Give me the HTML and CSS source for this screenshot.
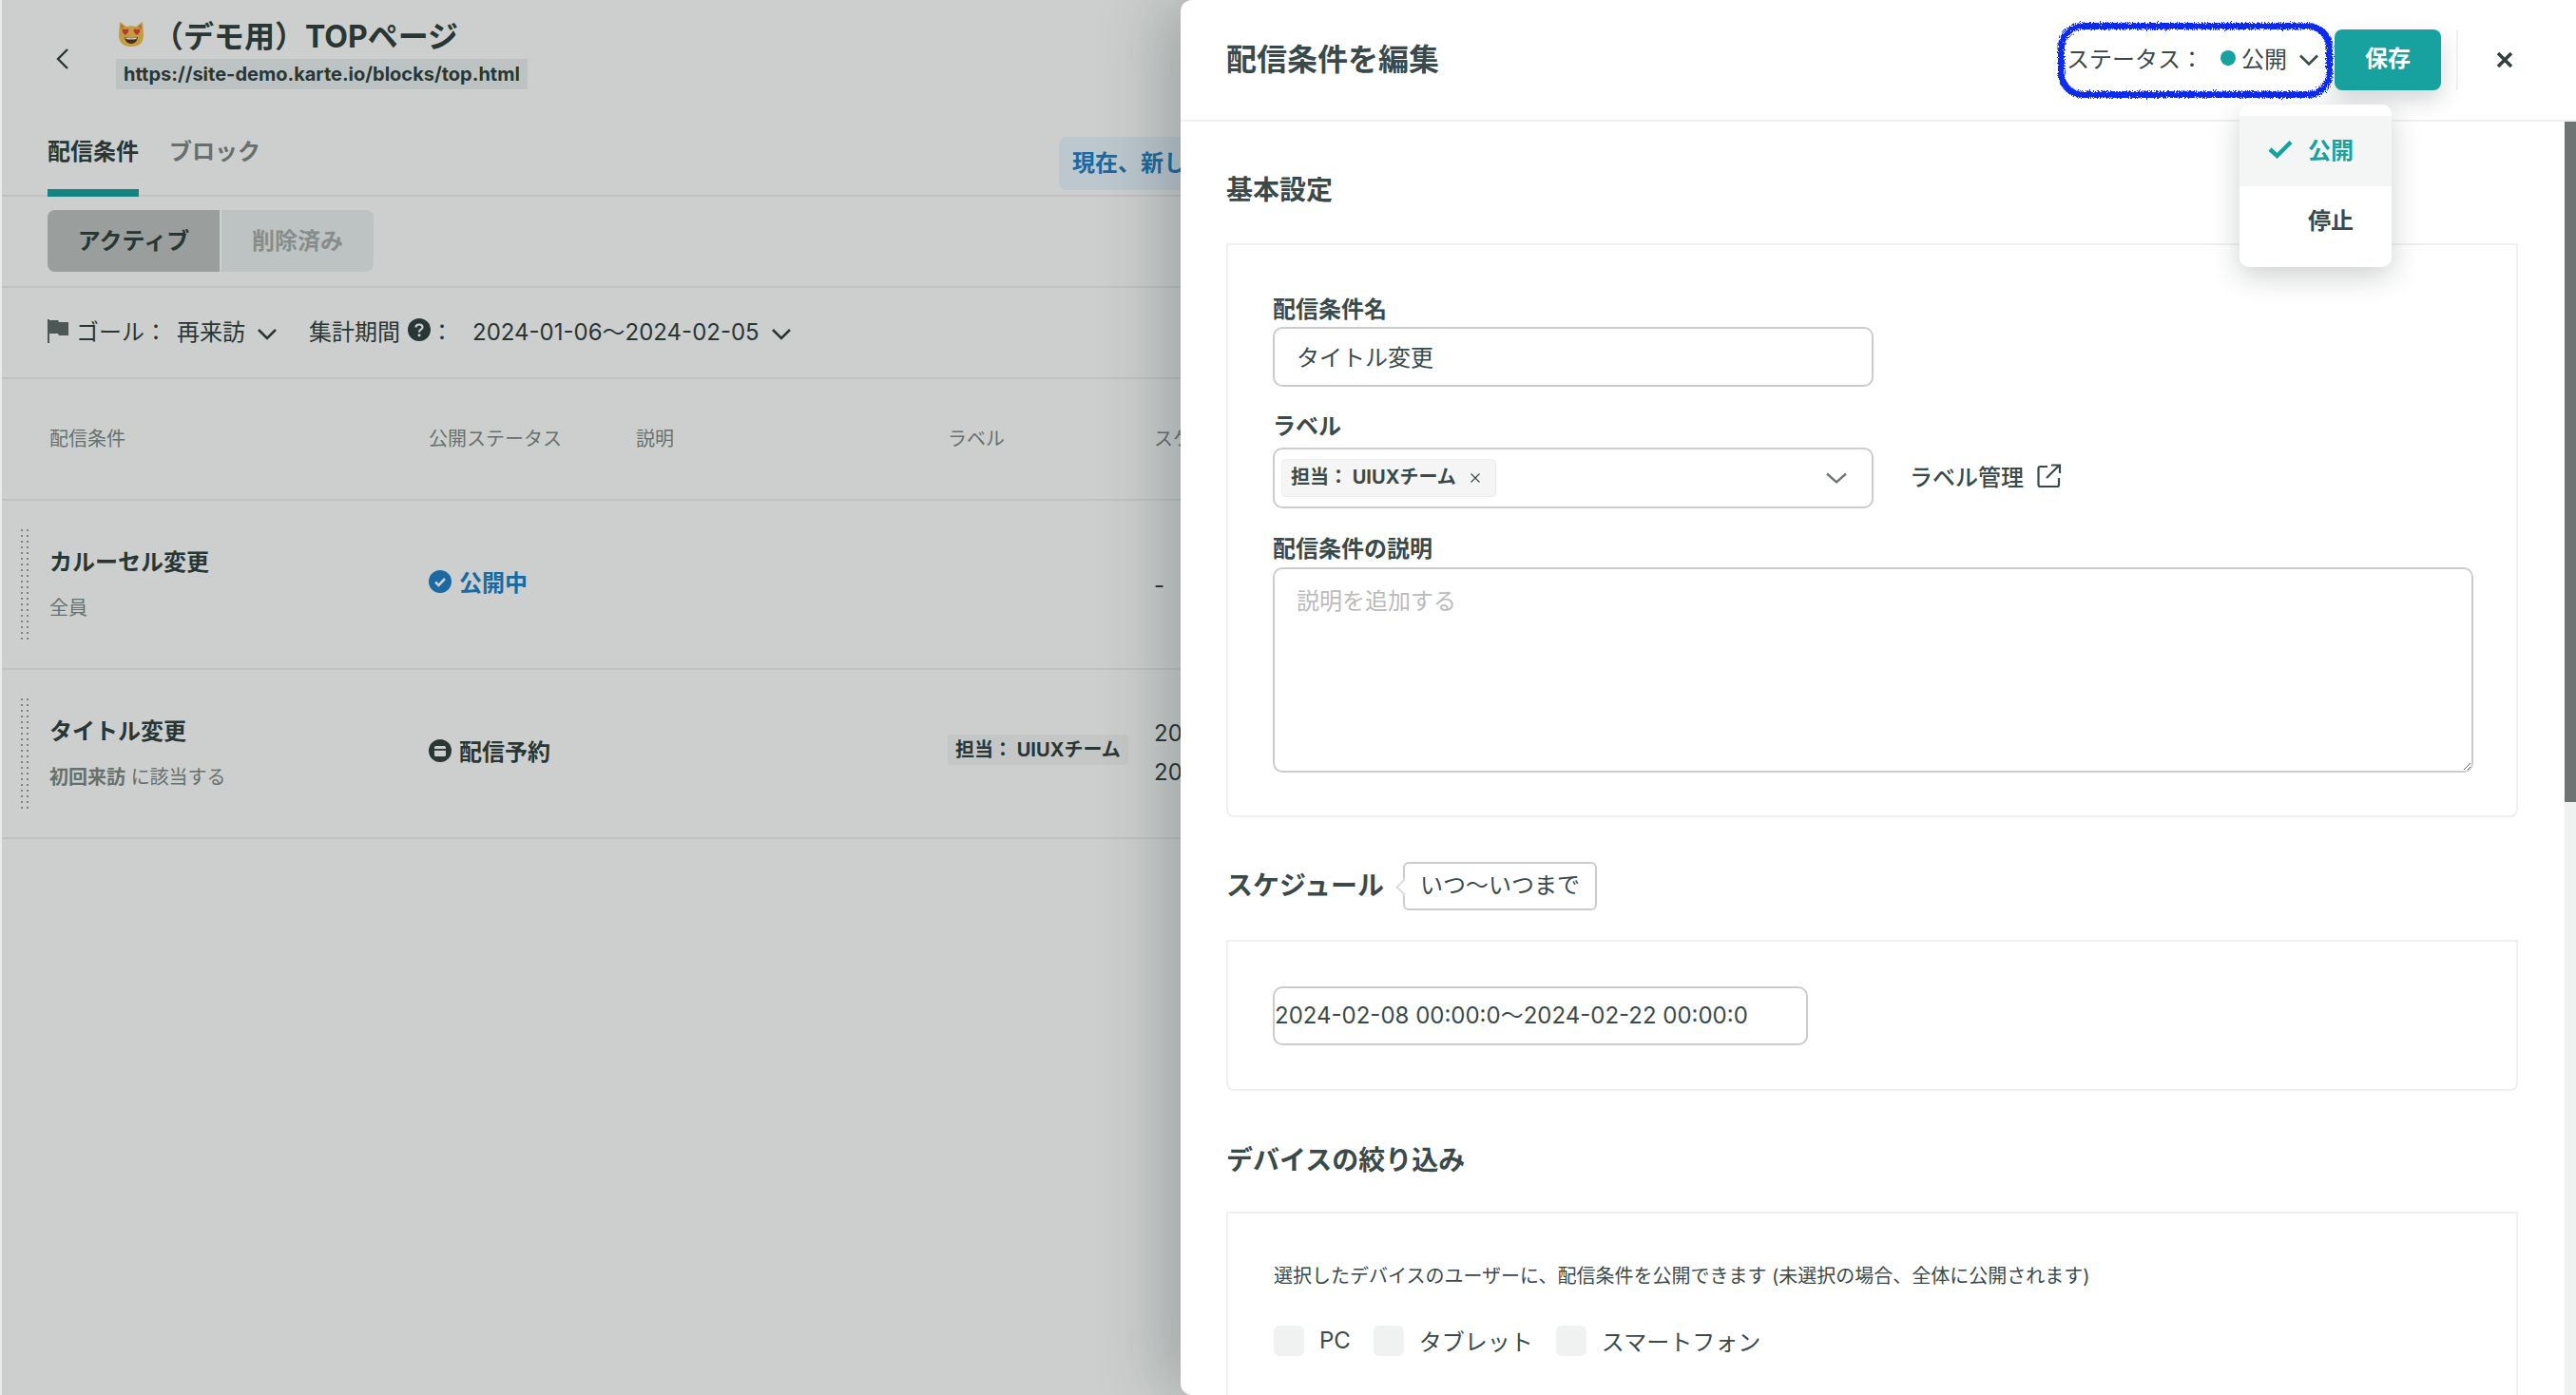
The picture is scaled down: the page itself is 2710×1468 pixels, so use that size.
FILE: index.html
```html
<!DOCTYPE html>
<html lang="ja">
<head>
    <meta charset="UTF-8">
    <title>配信条件を編集</title>
    <link rel="stylesheet" href="styles.css">
</head>
<body>

    <!-- Page behind the drawer -->
    <div class="page">
        <div class="page-head">
            <svg class="back-icon" width="16" height="24" viewBox="0 0 16 24"><polyline points="13,2 3,12 13,22" fill="none" stroke="currentColor" stroke-width="2.4"/></svg>
            <div class="page-title-block">
                <div class="page-title">
                    <svg class="cat-emoji" width="28" height="28" viewBox="0 0 28 28">
                        <path d="M2 1 L9 6 Q14 4.500 19 6 L26 1 L27 15 Q27 27 14 27 Q1 27 1 15 Z" fill="#f3c04f"/>
                        <path d="M3 3 L7 6 L3 9 Z M25 3 L21 6 L25 9 Z" fill="#d9913c"/>
                        <path d="M8 15 C3 11 4 7 8 9 C12 7 13 11 8 15 Z M20 15 C15 11 16 7 20 9 C24 7 25 11 20 15 Z" fill="#e8413f"/>
                        <path d="M7 17 Q14 19 21 17 Q20 24 14 24 Q8 24 7 17 Z" fill="#5a3420"/>
                        <path d="M8 17.500 Q14 19 20 17.500 L19.500 19 Q14 20 8.500 19 Z" fill="#fff"/>
                    </svg>
                    <span>（デモ用）TOPページ</span>
                </div>
                <span class="page-url">https://site-demo.karte.io/blocks/top.html</span>
            </div>
        </div>

        <div class="tabs">
            <div class="tab tab-active">配信条件</div>
            <div class="tab">ブロック</div>
            <div class="notice">現在、新しい配信条件を作成できます</div>
        </div>

        <div class="seg-row">
            <div class="seg seg-active">アクティブ</div>
            <div class="seg">削除済み</div>
        </div>

        <div class="filter-row">
            <svg class="flag-icon" width="22" height="28" viewBox="0 0 22 28"><path d="M0 3 H2 V28 H0 Z" fill="#5f6b69"/><path d="M2 4 H11 L12 6 H22 V20 H12 L11 18 H2 Z" fill="#5f6b69"/></svg>
            <span class="filter-label">ゴール：</span>
            <span class="filter-value">再来訪</span>
            <svg class="chevron" width="22" height="14" viewBox="0 0 22 14"><polyline points="2,3 11,12 20,3" fill="none" stroke="currentColor" stroke-width="2.6"/></svg>
            <span class="filter-period">集計期間</span>
            <svg class="help-icon" width="24" height="24" viewBox="0 0 24 24"><circle cx="12" cy="12" r="12" fill="#314140"/><path d="M8.500 9.500 Q8.500 6.500 12 6.500 Q15.500 6.500 15.500 9.300 Q15.500 11 13.500 12 Q12 12.800 12 14.500" fill="none" stroke="#fff" stroke-width="2.200"/><circle cx="12" cy="17.800" r="1.500" fill="#fff"/></svg>
            <span class="filter-colon">：</span>
            <span class="filter-value filter-date">2024-01-06〜2024-02-05</span>
            <svg class="chevron" width="22" height="14" viewBox="0 0 22 14"><polyline points="2,3 11,12 20,3" fill="none" stroke="currentColor" stroke-width="2.6"/></svg>
        </div>

        <div class="table-head">
            <div>配信条件</div>
            <div>公開ステータス</div>
            <div>説明</div>
            <div>ラベル</div>
            <div>スケジュール</div>
        </div>

        <div class="table-row">
            <div class="drag-handle"></div>
            <div class="row-name-cell">
                <div class="row-name">カルーセル変更</div>
                <div class="row-sub">全員</div>
            </div>
            <div class="row-status status-live">
                <svg width="24" height="24" viewBox="0 0 24 24"><circle cx="12" cy="12" r="12" fill="#2080c8"/><polyline points="7,12.500 10.500,16 17,9" fill="none" stroke="#fff" stroke-width="2.600"/></svg>
                <span>公開中</span>
            </div>
            <div></div>
            <div></div>
            <div class="row-schedule">-</div>
        </div>

        <div class="table-row">
            <div class="drag-handle"></div>
            <div class="row-name-cell">
                <div class="row-name">タイトル変更</div>
                <div class="row-sub"><b>初回来訪</b> に該当する</div>
            </div>
            <div class="row-status">
                <svg width="24" height="24" viewBox="0 0 24 24"><circle cx="12" cy="12" r="12" fill="#314140"/><rect x="6" y="7" width="12" height="11" rx="1.500" fill="#fff"/><rect x="6" y="10" width="12" height="1.800" fill="#314140"/></svg>
                <span>配信予約</span>
            </div>
            <div></div>
            <div><span class="row-tag">担当： UIUXチーム</span></div>
            <div class="row-schedule row-dates">
                <div>2024-02-08 00:00:00</div>
                <div>2024-02-22 00:00:00</div>
            </div>
        </div>

        <div class="backdrop"></div>
    </div>

    <!-- Drawer -->
    <div class="drawer">
        <div class="drawer-head">
            <div class="drawer-title">配信条件を編集</div>
            <div class="status-select">
                <span class="scribble"></span>
                <span>ステータス：</span>
                <span class="status-dot"></span>
                <span>公開</span>
                <svg width="22" height="14" viewBox="0 0 22 14"><polyline points="2,2.500 11,11.500 20,2.500" fill="none" stroke="#3a4a4a" stroke-width="2.600"/></svg>
            </div>
            <div class="save-btn">保存</div>
            <div class="head-sep"></div>
            <svg class="close-icon" width="18" height="18" viewBox="0 0 18 18"><path d="M2 2 L16 16 M16 2 L2 16" stroke="#33403f" stroke-width="3.600"/></svg>
        </div>

        <div class="status-menu">
            <div class="status-option status-option-on">
                <svg width="26" height="20" viewBox="0 0 26 20"><polyline points="2,10 9.500,17 24,2.500" fill="none" stroke="#17a2a0" stroke-width="4.500"/></svg>
                <span>公開</span>
            </div>
            <div class="status-option">
                <span class="status-option-text">停止</span>
            </div>
        </div>

        <div class="drawer-body">
            <div class="drawer-content">
                <h2 class="section-title section-first">基本設定</h2>
                <div class="card card-basic">
                    <div class="field-label label-name">配信条件名</div>
                    <div class="text-box box-name">タイトル変更</div>

                    <div class="field-label label-tags">ラベル</div>
                    <div class="tag-row">
                        <div class="text-box box-name tag-select">
                            <span class="tag-chip">担当： UIUXチーム<svg class="tag-x" width="12" height="12" viewBox="0 0 12 12"><path d="M1.500 1.500 L10.500 10.500 M10.500 1.500 L1.500 10.500" stroke="#3a4a4a" stroke-width="1.200"/></svg></span>
                            <svg width="24" height="14" viewBox="0 0 24 14"><polyline points="2,2.500 12,11.500 22,2.500" fill="none" stroke="#6f7775" stroke-width="2.400"/></svg>
                        </div>
                        <div class="tag-manage">
                            <span>ラベル管理</span>
                            <svg width="26" height="26" viewBox="0 0 26 26"><path d="M11 3 H3.500 Q1.500 3 1.500 5 V22 Q1.500 24 3.500 24 H21 Q23 24 23 22 V15" fill="none" stroke="#3a4a4a" stroke-width="2.200"/><path d="M10 15 L23 2 M15 1.500 H24 V10" fill="none" stroke="#3a4a4a" stroke-width="2.200"/></svg>
                        </div>
                    </div>

                    <div class="field-label label-desc">配信条件の説明</div>
                    <div class="text-box desc-box">説明を追加する</div>
                </div>

                <div class="section-row">
                    <h2 class="section-title">スケジュール</h2>
                    <div class="callout">いつ〜いつまで</div>
                </div>
                <div class="card card-schedule">
                    <div class="text-box date-box">2024-02-08 00:00:0〜2024-02-22 00:00:0</div>
                </div>

                <h2 class="section-title section-device">デバイスの絞り込み</h2>
                <div class="card card-device">
                    <div class="device-note">選択したデバイスのユーザーに、配信条件を公開できます (未選択の場合、全体に公開されます)</div>
                    <div class="device-row">
                        <span class="check"></span><span class="check-label">PC</span>
                        <span class="check"></span><span class="check-label">タブレット</span>
                        <span class="check"></span><span class="check-label">スマートフォン</span>
                    </div>
                </div>
            </div>
            <div class="scrollbar"><div class="scrollbar-thumb"></div></div>
        </div>
    </div>

    <!-- Rough edge for the hand drawn highlight -->
    <svg class="svg-defs" width="0" height="0">
        <filter id="rough" x="-5%" y="-10%" width="110%" height="120%">
            <feTurbulence type="fractalNoise" baseFrequency="0.9" numOctaves="2" seed="4"/>
            <feDisplacementMap in="SourceGraphic" scale="7"/>
        </filter>
    </svg>

</body>
</html>
```

FILE: styles.css
```css
* {
    box-sizing: border-box;
}

html, body {
    margin: 0;
    height: 100%;
    overflow: hidden;
}

body {
    position: relative;
    font-family: Inter, "Noto Sans CJK JP", sans-serif;
    font-size: 24px;
    color: #3a4a4a;
    background-color: #ffffff;
}

/* Page behind the drawer */
.page {
    position: relative;
    height: 100%;
    overflow: hidden;
    border-left: 2px solid #eaeaea;
    color: #314140;
    white-space: nowrap;
}

.backdrop {
    position: absolute;
    top: 0;
    right: 0;
    bottom: 0;
    left: -2px;
    background-color: rgba(5, 15, 10, 0.2);
}

.page-head {
    display: flex;
    align-items: flex-start;
    height: 120px;
    padding-left: 56px;
}

.back-icon {
    margin-top: 50px;
}

.page-title-block {
    margin-left: 48px;
    padding-top: 16px;
}

.page-title {
    display: flex;
    align-items: center;
    height: 40px;
    margin-bottom: 6px;
    font-size: 32px;
    font-weight: 700;
}

.cat-emoji {
    margin-left: 2px;
    margin-right: 9px;
}

.page-url {
    display: inline-block;
    height: 32px;
    padding: 0 8px;
    line-height: 32px;
    font-size: 20px;
    font-weight: 700;
    background-color: #ecf0f1;
}

.tabs {
    display: flex;
    height: 87px;
    padding-left: 48px;
    border-bottom: 2px solid #f0f0f0;
}

.tab {
    height: 87px;
    padding-top: 24px;
    margin-right: 32px;
    line-height: 32px;
    font-weight: 700;
    color: #7f8a88;
}

.tab-active {
    color: #314140;
    border-bottom: 8px solid #17a2a0;
}

.notice {
    height: 56px;
    margin-top: 24px;
    margin-left: 808px;
    padding: 0 14px;
    line-height: 56px;
    font-weight: 700;
    color: #2080c8;
    background-color: #eaf6ff;
    border-radius: 8px;
}

.seg-row {
    display: flex;
    gap: 2px;
    height: 96px;
    padding: 14px 0 15px 48px;
    border-bottom: 2px solid #f0f0f0;
}

.seg {
    width: 160px;
    line-height: 65px;
    text-align: center;
    font-weight: 700;
    color: #a8adae;
    background-color: #ecf0f1;
    border-radius: 0 8px 8px 0;
}

.seg-active {
    width: 181px;
    color: #314140;
    background-color: #c0c2c1;
    border-radius: 8px 0 0 8px;
}

.filter-row {
    display: flex;
    align-items: center;
    height: 96px;
    padding-left: 48px;
    padding-bottom: 6px;
    border-bottom: 2px solid #f0f0f0;
}

.flag-icon {
    margin-right: 8px;
}

.filter-label {
    width: 106px;
}

.chevron {
    margin-left: 12px;
    margin-top: 7px;
}

.filter-period {
    margin-left: 33px;
    margin-right: 8px;
}

.filter-colon {
    width: 44px;
}

/* Table */
.table-head {
    display: grid;
    grid-template-columns: 399px 218px 328px 217px 1fr;
    align-items: center;
    height: 128px;
    padding-left: 50px;
    padding-bottom: 3px;
    font-size: 20px;
    color: #7f8a88;
    border-bottom: 2px solid #f0f0f0;
}

.table-row {
    display: grid;
    grid-template-columns: 32px 399px 218px 328px 217px 1fr;
    align-items: center;
    height: 178px;
    padding-left: 18px;
    border-bottom: 2px solid #f0f0f0;
}

.drag-handle {
    width: 12px;
    height: 120px;
    background-image: radial-gradient(circle, #9aa2a0 1px, transparent 1.3px);
    background-size: 6px 6px;
}

.row-name {
    line-height: 32px;
    font-weight: 700;
    margin-bottom: 17px;
}

.row-sub {
    line-height: 30px;
    font-size: 20px;
    color: #7f8a88;
}

.row-status {
    display: flex;
    align-items: center;
    gap: 8px;
    margin-bottom: 7px;
    font-weight: 700;
}

.status-live {
    color: #2080c8;
}

.row-tag {
    display: inline-block;
    height: 32px;
    padding: 0 8px;
    line-height: 32px;
    font-size: 20px;
    font-weight: 700;
    margin-bottom: 8px;
    background-color: #f5f5f5;
    border-radius: 4px;
}

.row-dates {
    margin-bottom: 2px;
    line-height: 41px;
}

/* Drawer */
.drawer {
    position: absolute;
    top: 0;
    right: 0;
    bottom: 0;
    width: 1468px;
    display: flex;
    flex-direction: column;
    background-color: #ffffff;
    border-radius: 12px 0 0 12px;
    box-shadow: -16px 0 70px rgba(30, 45, 50, 0.28);
}

.drawer-head {
    display: flex;
    align-items: center;
    flex-shrink: 0;
    height: 128px;
    padding-left: 48px;
    border-bottom: 2px solid #f0f0f0;
}

.drawer-title {
    margin-right: 651px;
    padding-bottom: 6px;
    font-size: 32px;
    font-weight: 700;
}

.status-select {
    position: relative;
    display: flex;
    align-items: center;
    width: 291px;
    height: 79px;
    padding-left: 9px;
    padding-bottom: 5px;
}

.scribble {
    position: absolute;
    top: 0;
    left: 0;
    right: 2px;
    bottom: 0;
    border: 7px solid #0a2cf0;
    border-radius: 26px;
    filter: url(#rough);
}

.status-dot {
    width: 16px;
    height: 16px;
    margin-left: 18px;
    margin-right: 6px;
    background-color: #17a2a0;
    border-radius: 50%;
}

.status-select svg {
    margin-left: 12px;
    margin-top: 5px;
}

.save-btn {
    width: 112px;
    height: 64px;
    line-height: 62px;
    text-align: center;
    font-weight: 700;
    color: #ffffff;
    background-color: #17a2a0;
    border-radius: 8px;
    box-shadow: 0 10px 24px rgba(30, 45, 50, 0.2);
}

.head-sep {
    width: 2px;
    height: 64px;
    margin-left: 16px;
    margin-right: 40px;
    background-color: #f0f0f0;
}

.status-menu {
    position: absolute;
    top: 110px;
    left: 1114px;
    z-index: 2;
    width: 160px;
    padding: 12px 0 11px;
    background-color: #ffffff;
    border-radius: 10px;
    box-shadow: 0 10px 30px rgba(30, 45, 50, 0.22);
}

.status-option {
    display: flex;
    align-items: center;
    gap: 16px;
    height: 74px;
    padding-left: 30px;
    padding-bottom: 5px;
    font-weight: 700;
}

.status-option-on {
    color: #17a2a0;
    background-color: #f4f6f6;
}

.status-option-text {
    margin-left: 42px;
}

.drawer-body {
    display: flex;
    flex-grow: 1;
    min-height: 0;
}

.drawer-content {
    flex-grow: 1;
    min-width: 0;
    padding: 0 49px 0 48px;
    overflow: hidden;
}

.scrollbar {
    flex-shrink: 0;
    width: 12px;
    background-color: #f0f2f2;
}

.scrollbar-thumb {
    height: 716px;
    background-color: #6f7373;
}

.section-title {
    margin: 0;
    line-height: 40px;
    font-size: 28px;
    font-weight: 700;
}

.section-first {
    margin-top: 52px;
    margin-bottom: 36px;
}

.section-device {
    margin-top: 53px;
    margin-bottom: 34px;
}

.section-row {
    display: flex;
    align-items: center;
    height: 52px;
    margin-top: 46px;
    margin-bottom: 31px;
}

.callout {
    position: relative;
    height: 51px;
    margin-left: 20px;
    padding: 0 16px;
    line-height: 45px;
    border: 2px solid #cccccc;
    border-radius: 6px;
}

.callout::before {
    content: "";
    position: absolute;
    top: 18px;
    left: -7px;
    width: 11px;
    height: 11px;
    background-color: #ffffff;
    border-left: 2px solid #dddddd;
    border-bottom: 2px solid #dddddd;
    transform: rotate(45deg);
}

.card {
    padding-left: 47px;
    border: 2px solid #f0f0f0;
    border-radius: 0 0 8px 8px;
}

.card-basic {
    height: 604px;
    padding-top: 52px;
}

.card-schedule {
    height: 159px;
    padding-top: 47px;
}

.card-device {
    height: 400px;
    padding-top: 51px;
}

.field-label {
    line-height: 32px;
    font-weight: 700;
}

.label-name {
    margin-bottom: 2px;
}

.label-tags {
    margin-top: 26px;
    margin-bottom: 6px;
}

.label-desc {
    margin-top: 27px;
    margin-bottom: 3px;
}

.text-box {
    border: 2px solid #cccccc;
    border-radius: 10px;
}

.box-name {
    width: 632px;
    height: 63px;
    padding-left: 23px;
    line-height: 62px;
}

.tag-row {
    display: flex;
    align-items: center;
}

.tag-select {
    display: flex;
    align-items: center;
    justify-content: space-between;
    height: 64px;
    padding-left: 7px;
    padding-right: 25px;
}

.tag-chip {
    height: 40px;
    padding: 0 15px 0 9px;
    line-height: 37px;
    font-size: 20px;
    font-weight: 700;
    background-color: #f5f5f5;
    border: 1px solid #eeeeee;
    border-radius: 4px;
}

.tag-x {
    margin-left: 14px;
}

.tag-manage {
    display: flex;
    align-items: center;
    gap: 14px;
    margin-left: 38px;
    padding-bottom: 5px;
    font-weight: 500;
}

.desc-box {
    width: 1263px;
    height: 216px;
    padding: 14px 23px;
    line-height: 40px;
    color: #bbbbbb;
    resize: both;
    overflow: auto;
}

.date-box {
    width: 563px;
    height: 62px;
    line-height: 58px;
}

.device-note {
    font-size: 20px;
    line-height: 30px;
    padding-left: 1px;
}

.device-row {
    display: flex;
    align-items: center;
    margin-top: 35px;
    margin-left: 1px;
}

.check {
    width: 32px;
    height: 32px;
    background-color: #f0f2f2;
    border-radius: 6px;
}

.check-label {
    margin-left: 16px;
    margin-right: 24px;
    font-size: 24px;
}

.svg-defs {
    position: absolute;
}
```
